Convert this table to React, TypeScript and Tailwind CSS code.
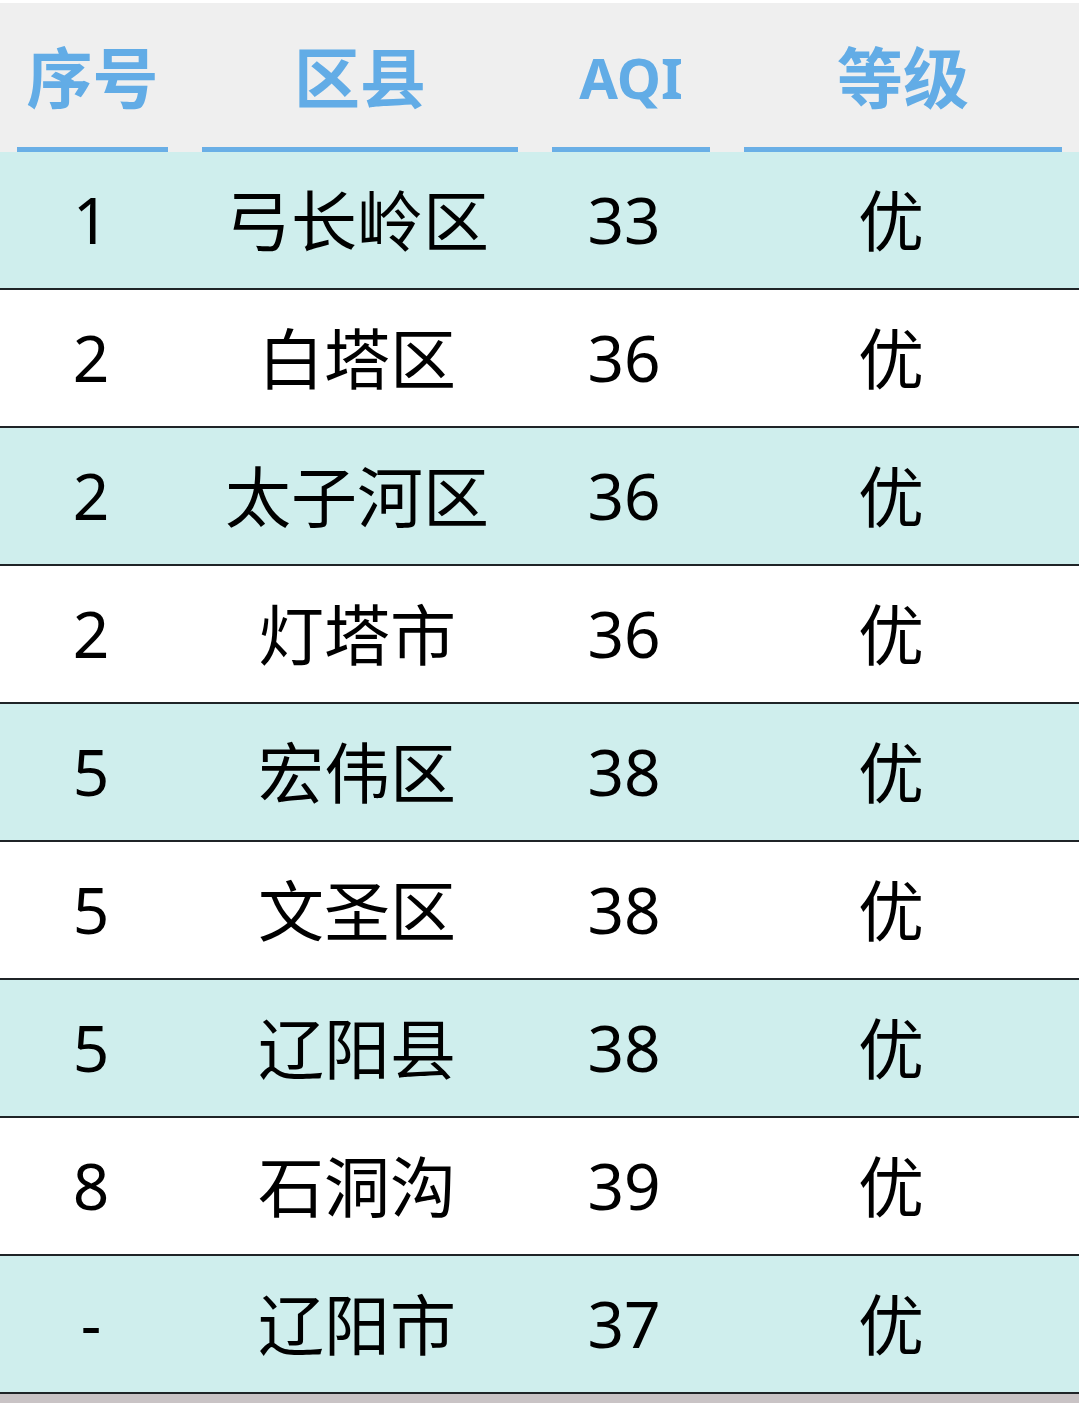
const rows = [
  { no: "1", name: "弓长岭区", aqi: "33", level: "优" },
  { no: "2", name: "白塔区", aqi: "36", level: "优" },
  { no: "2", name: "太子河区", aqi: "36", level: "优" },
  { no: "2", name: "灯塔市", aqi: "36", level: "优" },
  { no: "5", name: "宏伟区", aqi: "38", level: "优" },
  { no: "5", name: "文圣区", aqi: "38", level: "优" },
  { no: "5", name: "辽阳县", aqi: "38", level: "优" },
  { no: "8", name: "石洞沟", aqi: "39", level: "优" },
  { no: "-", name: "辽阳市", aqi: "37", level: "优" },
];

const headers = [
  { label: "序号", size: "text-[66px]" },
  { label: "区县", size: "text-[66px]" },
  { label: "AQI", size: "text-[56px]" },
  { label: "等级", size: "text-[66px]" },
];

export default function App() {
  return (
    <div
      className="w-[1079px] h-[1403px] overflow-hidden bg-[#c9c3c5]"
      style={{ fontFamily: '"Noto Sans", "Noto Sans CJK SC", sans-serif' }}
    >
      <div className="h-[3px] bg-white" />
      <div className="grid grid-cols-[185px_350px_192px_352px] h-[149px] bg-[#efefef]">
        {headers.map((h) => (
          <div key={h.label} className="flex flex-col px-[17px]">
            <div
              className={
                "flex-1 flex items-center justify-center pt-[4px] font-bold text-[#62ace6] leading-none " +
                h.size
              }
            >
              {h.label}
            </div>
            <div className="h-[5px] bg-[#6aafe6]" />
          </div>
        ))}
      </div>
      {rows.map((r, i) => (
        <div
          key={i}
          className={
            "grid grid-cols-[182px_350px_184px_350px] h-[138px] border-b-2 border-[#1f2427] text-black leading-none " +
            (i % 2 === 0 ? "bg-[#cfeeed]" : "bg-white")
          }
        >
          <div className="flex items-center justify-center text-[64px]">{r.no}</div>
          <div className="flex items-center justify-center text-[66px]">{r.name}</div>
          <div className="flex items-center justify-center text-[64px]">{r.aqi}</div>
          <div className="flex items-center justify-center text-[66px]">{r.level}</div>
        </div>
      ))}
    </div>
  );
}
